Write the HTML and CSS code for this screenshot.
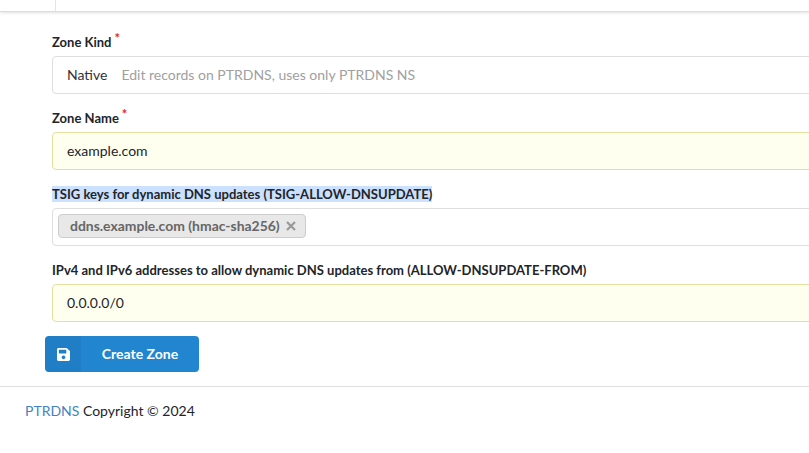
FILE: index.html
```html
<!DOCTYPE html>
<html lang="en">
<head>
<meta charset="utf-8">
<title>Create Zone</title>
<link rel="stylesheet" href="styles.css">
</head>
<body>
<header class="topbar"><div class="topbar-item"></div></header>
<main class="content">
  <form class="form">
    <div class="field field-first">
      <label class="label">Zone Kind<span class="req">*</span></label>
      <div class="box"><span class="kind">Native</span><span class="desc">Edit records on PTRDNS, uses only PTRDNS NS</span></div>
    </div>
    <div class="field">
      <label class="label">Zone Name<span class="req">*</span></label>
      <div class="box box-filled">example.com</div>
    </div>
    <div class="field">
      <label class="label"><span class="selected">TSIG keys for dynamic DNS updates (TSIG-ALLOW-DNSUPDATE)</span></label>
      <div class="box box-tags"><span class="tag">ddns.example.com (hmac-sha256)<svg class="tag-x" viewBox="0 0 10 10" width="10" height="10"><path d="M1 1L9 9M9 1L1 9" stroke="#999" stroke-width="2.200" fill="none"/></svg></span></div>
    </div>
    <div class="field field-gap">
      <label class="label">IPv4 and IPv6 addresses to allow dynamic DNS updates from (ALLOW-DNSUPDATE-FROM)</label>
      <div class="box box-filled">0.0.0.0/0</div>
    </div>
    <button class="btn" type="button">
      <span class="btn-icon"><svg viewBox="0 0 448 512" width="13" height="15"><path fill="#fff" d="M433.9 129.9l-83.9-83.9A48 48 0 0 0 316.1 32H48C21.5 32 0 53.5 0 80v352c0 26.5 21.5 48 48 48h352c26.5 0 48-21.5 48-48V163.900a48 48 0 0 0-14.100-34zM224 416c-35.300 0-64-28.700-64-64s28.700-64 64-64 64 28.700 64 64-28.700 64-64 64zm96-304.500V212c0 6.600-5.400 12-12 12H76c-6.600 0-12-5.400-12-12V108c0-6.600 5.400-12 12-12h228.500c3.200 0 6.200 1.300 8.500 3.500l3.500 3.500c2.200 2.300 3.500 5.300 3.500 8.500z"/></svg></span>
      <span class="btn-text">Create Zone</span>
    </button>
  </form>
</main>
<footer class="footer"><a class="footer-link" href="#">PTRDNS</a> Copyright © 2024</footer>
</body>
</html>
```
FILE: styles.css
```css
html, body { margin: 0; padding: 0; }
body {
  width: 809px;
  height: 453px;
  overflow: hidden;
  background: #fff;
  font-family: Lato, "Liberation Sans", sans-serif;
  font-size: 14px;
  line-height: 20px;
  color: #212529;
}
.topbar {
  height: 11px;
  background: #fff;
  border-bottom: 1px solid #dcdcdc;
  box-shadow: 0 1px 3px rgba(0, 0, 0, .12);
}
.topbar-item {
  height: 11px;
  width: 55px;
  border-right: 1px solid #e4e4e4;
}
.content { padding: 0 0 14px 45px; }
.form { width: 830px; }
.field { padding-left: 7px; margin-bottom: 14px; }
.field-first { padding-top: 20px; }
.field-gap { margin-top: 14px; }
.label {
  display: block;
  height: 20px;
  margin-bottom: 4px;
  font-weight: 700;
  font-size: 13.02px;
  color: #212529;
}
.req {
  margin-left: 3px;
  color: #db2828;
  font-size: 13px;
  vertical-align: 4px;
  line-height: 0;
}
.selected { background: #cce0ff; }
.box {
  box-sizing: border-box;
  display: flex;
  align-items: center;
  height: 38px;
  padding: 0 14px;
  background: #fff;
  border: 1px solid #dedede;
  border-radius: 4px;
  font-size: 14px;
}
.box-filled { background: #fffff0; border-color: #e6e0a0; color: #212529; }
.box-tags { align-items: flex-start; padding: 5px 5px 0; }
.kind { color: #333; margin-right: 14px; }
.desc { color: #a0a0a0; }
.tag {
  display: inline-flex;
  align-items: center;
  box-sizing: border-box;
  height: 24px;
  padding: 0 9px 0 11px;
  background: #e8e8e8;
  border: 1px solid #cdcdcd;
  border-radius: 4px;
  color: #666;
  font-weight: 700;
  font-size: 13.95px;
}
.tag-x { margin-left: 6px; }
.btn {
  display: flex;
  align-items: stretch;
  width: 154px;
  height: 36px;
  padding: 0;
  border: 0;
  border-radius: 4px;
  overflow: hidden;
  background: #2185d0;
  color: #fff;
  font-family: inherit;
  font-size: 14px;
  font-weight: 700;
}
.btn-icon {
  display: flex;
  align-items: center;
  justify-content: center;
  width: 36px;
  background: rgba(0, 0, 0, .05);
}
.btn-text { flex: 1; align-self: center; padding-bottom: 2px; }
.footer {
  border-top: 1px solid #dedede;
  padding: 14px 25px;
  font-size: 14px;
}
.footer-link { color: #4183c4; text-decoration: none; }
```
